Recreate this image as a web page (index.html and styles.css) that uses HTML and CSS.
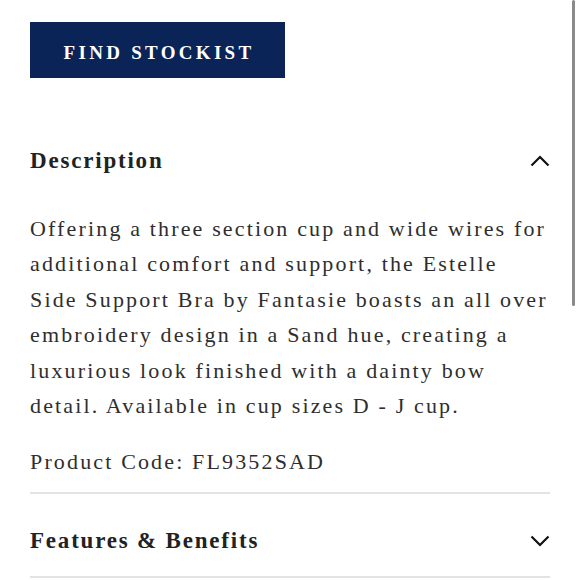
FILE: index.html
```html
<!DOCTYPE html>
<html lang="en">
<head>
<meta charset="utf-8">
<link rel="stylesheet" href="styles.css">
</head>
<body>
<div class="page">
  <button class="stockist">FIND STOCKIST</button>
  <section class="acc open">
    <div class="acc-head">
      <h2 class="acc-title">Description</h2>
      <svg class="chev" width="20" height="12" viewBox="0 0 20 12"><polyline points="1.5,10.5 10,2 18.5,10.5" fill="none" stroke="#111" stroke-width="2.2"/></svg>
    </div>
    <div class="acc-body">
      <p>Offering a three section cup and wide wires for additional comfort and support, the Estelle Side Support Bra by Fantasie boasts an all over embroidery design in a Sand hue, creating a luxurious look finished with a dainty bow detail. Available in cup sizes D - J cup.</p>
      <p>Product Code: FL9352SAD</p>
    </div>
  </section>
  <section class="acc">
    <div class="acc-head">
      <h2 class="acc-title">Features &amp; Benefits</h2>
      <svg class="chev" width="20" height="12" viewBox="0 0 20 12"><polyline points="1.5,1.5 10,10 18.5,1.5" fill="none" stroke="#111" stroke-width="2.2"/></svg>
    </div>
  </section>
</div>
<div class="scrollbar"></div>
</body>
</html>
```
FILE: styles.css
```css
html, body {
  margin: 0;
  padding: 0;
  background: #fff;
}
body {
  font-family: "Liberation Serif", "Times New Roman", serif;
  color: #2e2e2e;
  width: 580px;
  height: 580px;
  overflow: hidden;
}
.page {
  padding: 22px 30px 0 30px;
  width: 520px;
}
.stockist {
  display: flex;
  align-items: center;
  justify-content: center;
  width: 255px;
  height: 56px;
  background: #0b2457;
  color: #fff;
  border: none;
  font-family: "Liberation Serif", serif;
  font-weight: bold;
  font-size: 19px;
  letter-spacing: 3.3px;
  padding: 5px 0 0 3px;
  margin: 0;
}
.acc-head {
  display: flex;
  align-items: center;
  justify-content: space-between;
  height: 70px;
  padding-top: 12px;
}
.acc.open .acc-head {
  margin-top: 64px;
  height: 38px;
  padding-top: 0;
}
.acc-title {
  margin: 0;
  font-size: 23px;
  font-weight: bold;
  letter-spacing: 1.8px;
  color: #222;
}
.chev {
  display: block;
}
.acc-body {
  padding-top: 31px;
  padding-bottom: 12px;
  border-bottom: 2px solid #e3e3e3;
}
.acc-body p {
  margin: 0 0 21px 0;
  font-size: 22px;
  line-height: 35.4px;
  letter-spacing: 2.15px;
}
.acc-body p:last-child {
  margin-bottom: 0;
}
.acc + .acc {
  border-bottom: 2px solid #e3e3e3;
}
.scrollbar {
  position: absolute;
  left: 572px;
  top: 0;
  width: 3px;
  height: 306px;
  background: #8a8a8a;
  border-radius: 2px;
}
```
